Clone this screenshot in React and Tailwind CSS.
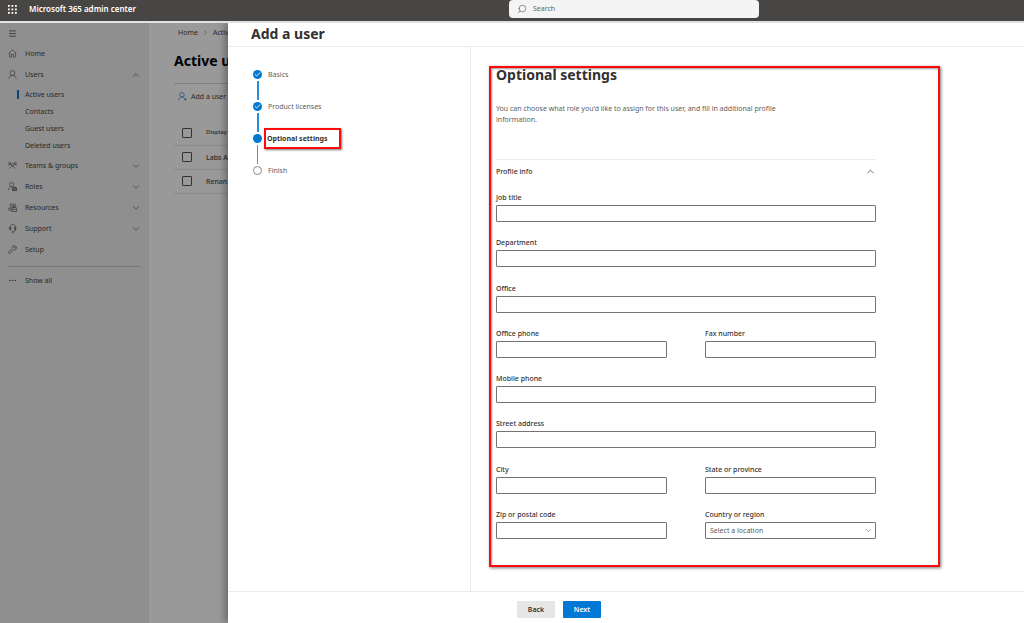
import React from 'react';
import { Check, ChevronDown, ChevronRight, ChevronUp, Menu, MoreHorizontal, Search } from 'lucide-react';

const Svg = ({ children, className }) => (
    <svg viewBox="0 0 16 16" fill="none" stroke="currentColor" strokeWidth="1.2" className={className || 'w-[9px] h-[9px] shrink-0 text-[#605e5c]'}>
        {children}
    </svg>
);

const HomeIcon = () => (
    <Svg>
        <path d="M1 8 8 1.5 15 8M3 6.5V14.5H6.2V9.5H9.8V14.5H13V6.5" />
    </Svg>
);

const UserIcon = () => (
    <Svg>
        <circle cx="8" cy="5.3" r="4.3" />
        <path d="M1.5 15.5C2 12 4.5 9.6 8 9.6s6 2.4 6.5 5.9" />
    </Svg>
);

const AddUserIcon = () => (
    <Svg className="w-[9px] h-[9px] shrink-0 text-[#2b7cd3]">
        <circle cx="7" cy="5" r="4" />
        <path d="M1 15C1.4 11.5 3.7 9 7 9c2 0 3.6.8 4.7 2.2M13 10.5v5M10.5 13h5" />
    </Svg>
);

const TeamsIcon = () => (
    <Svg>
        <circle cx="3" cy="4" r="1.8" />
        <circle cx="13" cy="4" r="1.8" />
        <circle cx="8" cy="7" r="2.3" />
        <path d="M.5 8.5C1 6.8 2 6 3.2 6s1.8.4 2.4 1M15.5 8.5C15 6.8 14 6 12.8 6s-1.8.4-2.4 1M3.5 13.5C4 11 5.6 9.5 8 9.5s4 1.5 4.5 4" />
    </Svg>
);

const RolesIcon = () => (
    <Svg>
        <circle cx="6.5" cy="4.5" r="3.7" />
        <path d="M1 14.5C1.3 11 3.4 8.3 6.5 8.3c.8 0 1.5.2 2.2.5" />
        <rect x="8" y="10.5" width="7.5" height="5" fill="currentColor" fillOpacity="0.6" />
        <path d="M10 10.5V8.8h3.5v1.7" />
    </Svg>
);

const ResourcesIcon = () => (
    <Svg>
        <path d="M4 9.5V2h9v4M1 9.5h6M1.5 9.5V13H7" />
        <circle cx="9" cy="6" r="2" />
        <rect x="7" y="8.5" width="8" height="6.5" />
        <path d="M9 8.5V6.5h4v2M7 11.5h8" />
    </Svg>
);

const SupportIcon = () => (
    <Svg>
        <path d="M4 10V5.5C4 3 5.7 1 8.5 1S13 3 13 5.5V10M13 10c0 2.5-1.5 4-4.5 4.3" />
        <rect x="3" y="5.8" width="2" height="4.7" />
        <rect x="12" y="5.8" width="2" height="4.7" />
        <circle cx="8" cy="14.3" r="1" />
    </Svg>
);

const SetupIcon = () => (
    <Svg>
        <path d="M12.8 1.3A4 4 0 0 0 7.3 6.2L1.3 12.2a1.7 1.7 0 0 0 2.5 2.500l6-6A4 4 0 0 0 14.8 3.3L12.3 5.700 10.3 3.7z" />
    </Svg>
);

const MENU = [
    { label: 'Home', icon: HomeIcon },
    { label: 'Users', icon: UserIcon, open: true, items: ['Active users', 'Contacts', 'Guest users', 'Deleted users'] },
    { label: 'Teams & groups', icon: TeamsIcon, more: true },
    { label: 'Roles', icon: RolesIcon, more: true },
    { label: 'Resources', icon: ResourcesIcon, more: true },
    { label: 'Support', icon: SupportIcon, more: true },
    { label: 'Setup', icon: SetupIcon },
];

const FIELDS = [
    { id: 'jobTitle', label: 'Job title', wide: true },
    { id: 'department', label: 'Department', wide: true },
    { id: 'office', label: 'Office', wide: true },
    { id: 'officePhone', label: 'Office phone' },
    { id: 'fax', label: 'Fax number' },
    { id: 'mobile', label: 'Mobile phone', wide: true },
    { id: 'street', label: 'Street address', wide: true },
    { id: 'city', label: 'City' },
    { id: 'state', label: 'State or province' },
    { id: 'zip', label: 'Zip or postal code' },
];

const TopBar = () => (
    <header className="relative flex items-center h-[23px] shrink-0 bg-[#484644] border-b-2 border-[#e1e1e1] text-white">
        <button aria-label="App launcher" className="ml-2 pb-[3px]">
            <svg viewBox="0 0 9 9" fill="currentColor" className="block w-[9px] h-[9px]">
                {[0, 3.5, 7].map((y) => [0, 3.5, 7].map((x) => <rect key={`${x}-${y}`} x={x} y={y} width="1.8" height="1.8" />))}
            </svg>
        </button>
        <span className="ml-3 pb-[3px] text-[8px] font-semibold leading-4">Microsoft 365 admin center</span>
        <label className="absolute top-0 left-[49.7%] w-[250px] h-[18px] flex items-center gap-[6px] px-2 rounded-sm bg-[#f4f4f4] text-[#555]">
            <Search className="w-[10px] h-[10px] shrink-0 -scale-x-100" strokeWidth={1.5} />
            <input aria-label="Search" placeholder="Search" className="w-full text-[7px] leading-4 placeholder:text-[#666] outline-none" />
        </label>
    </header>
);

const Sidebar = () => (
    <nav className="w-[149px] shrink-0 px-2 bg-[#eeeeee] text-[#484644]">
        <button aria-label="Collapse menu" className="flex items-center h-5">
            <Menu className="w-[9px] h-[9px]" strokeWidth={2} />
        </button>
        {MENU.map(({ label, icon: Icon, open, more, items }) => (
            <div key={label}>
                <a href="#" className="flex items-center h-[21px] gap-2">
                    <Icon />
                    <span className="flex-1">{label}</span>
                    {open && <ChevronUp className="w-[10px] h-[10px]" strokeWidth={1.5} />}
                    {more && <ChevronDown className="w-[10px] h-[10px]" strokeWidth={1.5} />}
                </a>
                {items && (
                    <div className="py-px">
                        {items.map((item, i) => (
                            <a key={item} href="#" className="flex items-center h-[17px] pl-[9px]">
                                <span className={i === 0 ? 'w-[2px] h-[9px] bg-[#0078d4]' : 'w-[2px] h-[9px]'} />
                                <span className="pl-[6px]">{item}</span>
                            </a>
                        ))}
                    </div>
                )}
            </div>
        ))}
        <a href="#" className="flex items-center gap-2 mt-[6px] pt-2 border-t border-[#c8c8c8]">
            <MoreHorizontal className="w-[9px] h-[9px]" strokeWidth={1.5} />
            Show all
        </a>
    </nav>
);

const UsersPage = () => (
    <main className="flex-1 min-w-0 pl-[25px] bg-white text-[#484644] whitespace-nowrap">
        <div className="flex items-center gap-1 h-[18px] pl-1">
            <a href="#">Home</a>
            <ChevronRight className="w-[7px] h-[7px]" strokeWidth={1.5} />
            <a href="#">Active users</a>
        </div>
        <h1 className="mt-[11px] text-[14px] leading-[18px] font-bold text-black">Active users</h1>
        <button className="flex items-center gap-1 w-full h-[26px] mt-[13px] pl-1 border-t border-[#d8d8d8]">
            <AddUserIcon />
            Add a user
        </button>
        <table className="w-full mt-3 text-left">
            <tbody>
                {['Display name', 'Labs Admin', 'Renan'].map((name, i) => (
                    <tr key={name} className="h-6 border-b border-[#e8e8e8]">
                        <td className="w-[32px] pl-2">
                            <input type="checkbox" aria-label={name} className="block appearance-none w-[10px] h-[10px] rounded-[1px] border border-[#555]" />
                        </td>
                        <td className={i === 0 ? 'text-[6px] font-medium' : 'font-medium'}>{name}</td>
                    </tr>
                ))}
            </tbody>
        </table>
    </main>
);

const Marker = ({ state }) => {
    if (state === 'done') {
        return (
            <span className="flex items-center justify-center w-[9px] h-[9px] rounded-full bg-[#0078d4] text-white">
                <Check className="w-[7px] h-[7px]" strokeWidth={3} />
            </span>
        );
    }
    if (state === 'current') return <span className="w-[9px] h-[9px] rounded-full bg-[#0078d4]" />;
    return <span className="w-[9px] h-[9px] rounded-full border border-[#8a8886]" />;
};

const STEPS = [
    { label: 'Basics', state: 'done' },
    { label: 'Product licenses', state: 'done' },
    { label: 'Optional settings', state: 'current' },
    { label: 'Finish', state: 'todo' },
];

const Steps = () => (
    <ol className="w-[243px] shrink-0 pl-[25px] pt-[23px] border-r border-[#eaeaea] text-[#605e5c]">
        {STEPS.map(({ label, state }, i) => (
            <li key={label} className="flex gap-[2px] h-8">
                <div className="flex flex-col items-center gap-[2px]">
                    <Marker state={state} />
                    {i < 3 && <span className={state === 'done' ? 'w-[2px] h-[19px] bg-[#2a8dda]' : 'w-px h-[19px] bg-[#8a8886]'} />}
                </div>
                {state === 'current' ? (
                    <span className="self-start -mt-[6px] w-[77px] h-[21px] px-px border-2 border-[#ff0a0a] shadow-[1px_1px_2px_#777] leading-[17px] font-bold text-[#323130]">
                        {label}
                    </span>
                ) : (
                    <span className="pl-1 leading-[9px]">{label}</span>
                )}
            </li>
        ))}
    </ol>
);

const Field = ({ id, label, wide, children }) => (
    <div className={wide ? 'col-span-2' : ''}>
        <label htmlFor={id} className="block mb-[2px] leading-[10px] font-medium">
            {label}
        </label>
        {children || <input id={id} type="text" className="block w-full h-[17px] px-1 rounded-[1px] border border-[#767472] bg-white" />}
    </div>
);

const OptionalSettings = () => (
    <section className="flex flex-col w-[451px] mt-[19px] mb-6 ml-[18px] pl-[5px] pr-[62px] pb-[26px] border-2 border-[#ff0a0a] shadow-[1px_1px_3px_#777,inset_1px_1px_2px_#999]">
        <h2 className="-mt-[2px] text-[14px] leading-[18px] font-bold">Optional settings</h2>
        <p className="w-[300px] mt-[19px] leading-[11px] text-[#605e5c]">
            You can choose what role you'd like to assign for this user, and fill in additional profile information.
        </p>
        <button className="flex items-center justify-between mt-[34px] pt-[6px] border-t border-[#eaeaea] leading-[11px] font-medium">
            Profile info
            <ChevronUp className="w-[11px] h-[11px]" strokeWidth={1.5} />
        </button>
        <form className="flex-1 grid grid-cols-2 content-between gap-x-[38px] mt-4">
            {FIELDS.map((field) => (
                <Field key={field.id} {...field} />
            ))}
            <Field id="country" label="Country or region">
                <div className="relative">
                    <select id="country" className="block appearance-none w-full h-[17px] px-1 rounded-[1px] border border-[#767472] bg-white text-[#605e5c]">
                        <option>Select a location</option>
                    </select>
                    <ChevronDown className="absolute right-[3px] top-[4px] w-[9px] h-[9px] text-[#605e5c] pointer-events-none" strokeWidth={1.5} />
                </div>
            </Field>
        </form>
    </section>
);

const AddUserPanel = () => (
    <div role="dialog" aria-label="Add a user" className="absolute inset-y-0 left-[228px] right-0 flex flex-col bg-white text-[#323130] shadow-[-2px_0_8px_rgba(0,0,0,0.4)]">
        <h2 className="h-6 shrink-0 pl-[23px] border-b border-[#eaeaea] text-[14px] leading-[21px] font-bold">Add a user</h2>
        <div className="flex flex-1 min-h-0">
            <Steps />
            <OptionalSettings />
        </div>
        <footer className="flex gap-2 shrink-0 h-8 pt-[9px] pl-[289px] border-t border-[#eaeaea]">
            <button className="w-[38px] h-[17px] rounded-[1px] bg-[#e6e6e6] font-semibold">Back</button>
            <button className="w-[38px] h-[17px] rounded-[1px] bg-[#0078d4] font-semibold text-white">Next</button>
        </footer>
    </div>
);

export default function App() {
    return (
        <div className="flex flex-col h-screen overflow-hidden bg-white font-['Noto_Sans','Open_Sans',sans-serif] text-[7px] leading-[11px]">
            <TopBar />
            <div className="relative flex flex-1 min-h-0">
                <Sidebar />
                <UsersPage />
                <div className="absolute inset-0 overflow-hidden bg-black/40">
                    <AddUserPanel />
                </div>
            </div>
        </div>
    );
}
